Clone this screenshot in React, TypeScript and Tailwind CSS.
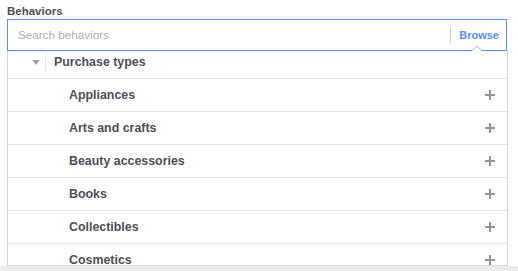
import React from "react";

const items = ["Appliances", "Arts and crafts", "Beauty accessories", "Books", "Collectibles", "Cosmetics"];

function PlusIcon() {
  return (
    <svg width="10" height="10" viewBox="0 0 10 10" className="shrink-0">
      <path d="M5 0V10M0 5H10" stroke="#90949c" strokeWidth="2" />
    </svg>
  );
}

export default function App() {
  return (
    <div className="w-[518px] h-[271px] bg-white overflow-hidden flex flex-col font-['Liberation_Sans',Arial,sans-serif]">
      <div className="pl-[7px] pt-[4px]">
        <div className="h-[15px] text-[11.5px] leading-[15px] font-bold text-[#4b4f56]">Behaviors</div>
        <div className="relative w-[501px]">
          <div className="w-[500px] h-[32px] border border-[#5890ff] flex items-center pl-[10px] pr-[7px]">
            <span className="flex-1 text-[11.7px] text-[#a9aeb5]">Search behaviors</span>
            <span className="w-px h-[16px] bg-[#c4cad6] mr-[8px]" />
            <span className="text-[11px] font-bold text-[#5890ff]">Browse</span>
          </div>
          <svg width="10" height="6" viewBox="0 0 10 6" className="absolute left-[465px] top-[26px]">
            <polygon points="0,6 5,1 10,6" fill="#ffffff" />
            <polyline points="0,6 5,1 10,6" fill="none" stroke="#a9b9d8" strokeWidth="1" />
          </svg>
          <div className="relative w-[501px] h-[215px] border-x border-b border-x-[#d3d5d8] border-b-[#d8d8d8] overflow-hidden bg-white">
            <div className="h-[28px] border-b border-[#e3e4e6] flex items-center pb-[5px] pl-[24px]">
              <svg width="8" height="5" viewBox="0 0 8 5">
                <polygon points="0,0 8,0 4,5" fill="#9da1a8" />
              </svg>
              <span className="w-px h-[17px] bg-[#e1e3e6] ml-[5px] mr-[8px]" />
              <span className="text-[12.4px] font-bold text-[#4b4f56]">Purchase types</span>
            </div>
            {items.map((it) => (
              <div key={it} className="h-[33px] shrink-0 border-b border-[#e3e4e6] flex items-center pl-[61px] pr-[12px]">
                <span className="flex-1 text-[12.4px] font-bold text-[#4b4f56]">{it}</span>
                <PlusIcon />
              </div>
            ))}
            <div className="absolute left-[-1px] top-[77px] w-px h-[140px] bg-[#8c8c8c]" />
            <div className="absolute right-[-1px] top-[54px] w-px h-[23px] bg-[#b9c4dc]" />
            <div className="absolute right-[-1px] top-[77px] w-px h-[60px] bg-[#8c8c8c]" />
            <div className="absolute right-[-1px] top-[137px] w-px h-[80px] bg-[#b9c4dc]" />
          </div>
        </div>
      </div>
      <div className="flex-1 bg-[#ebebeb]" />
    </div>
  );
}
